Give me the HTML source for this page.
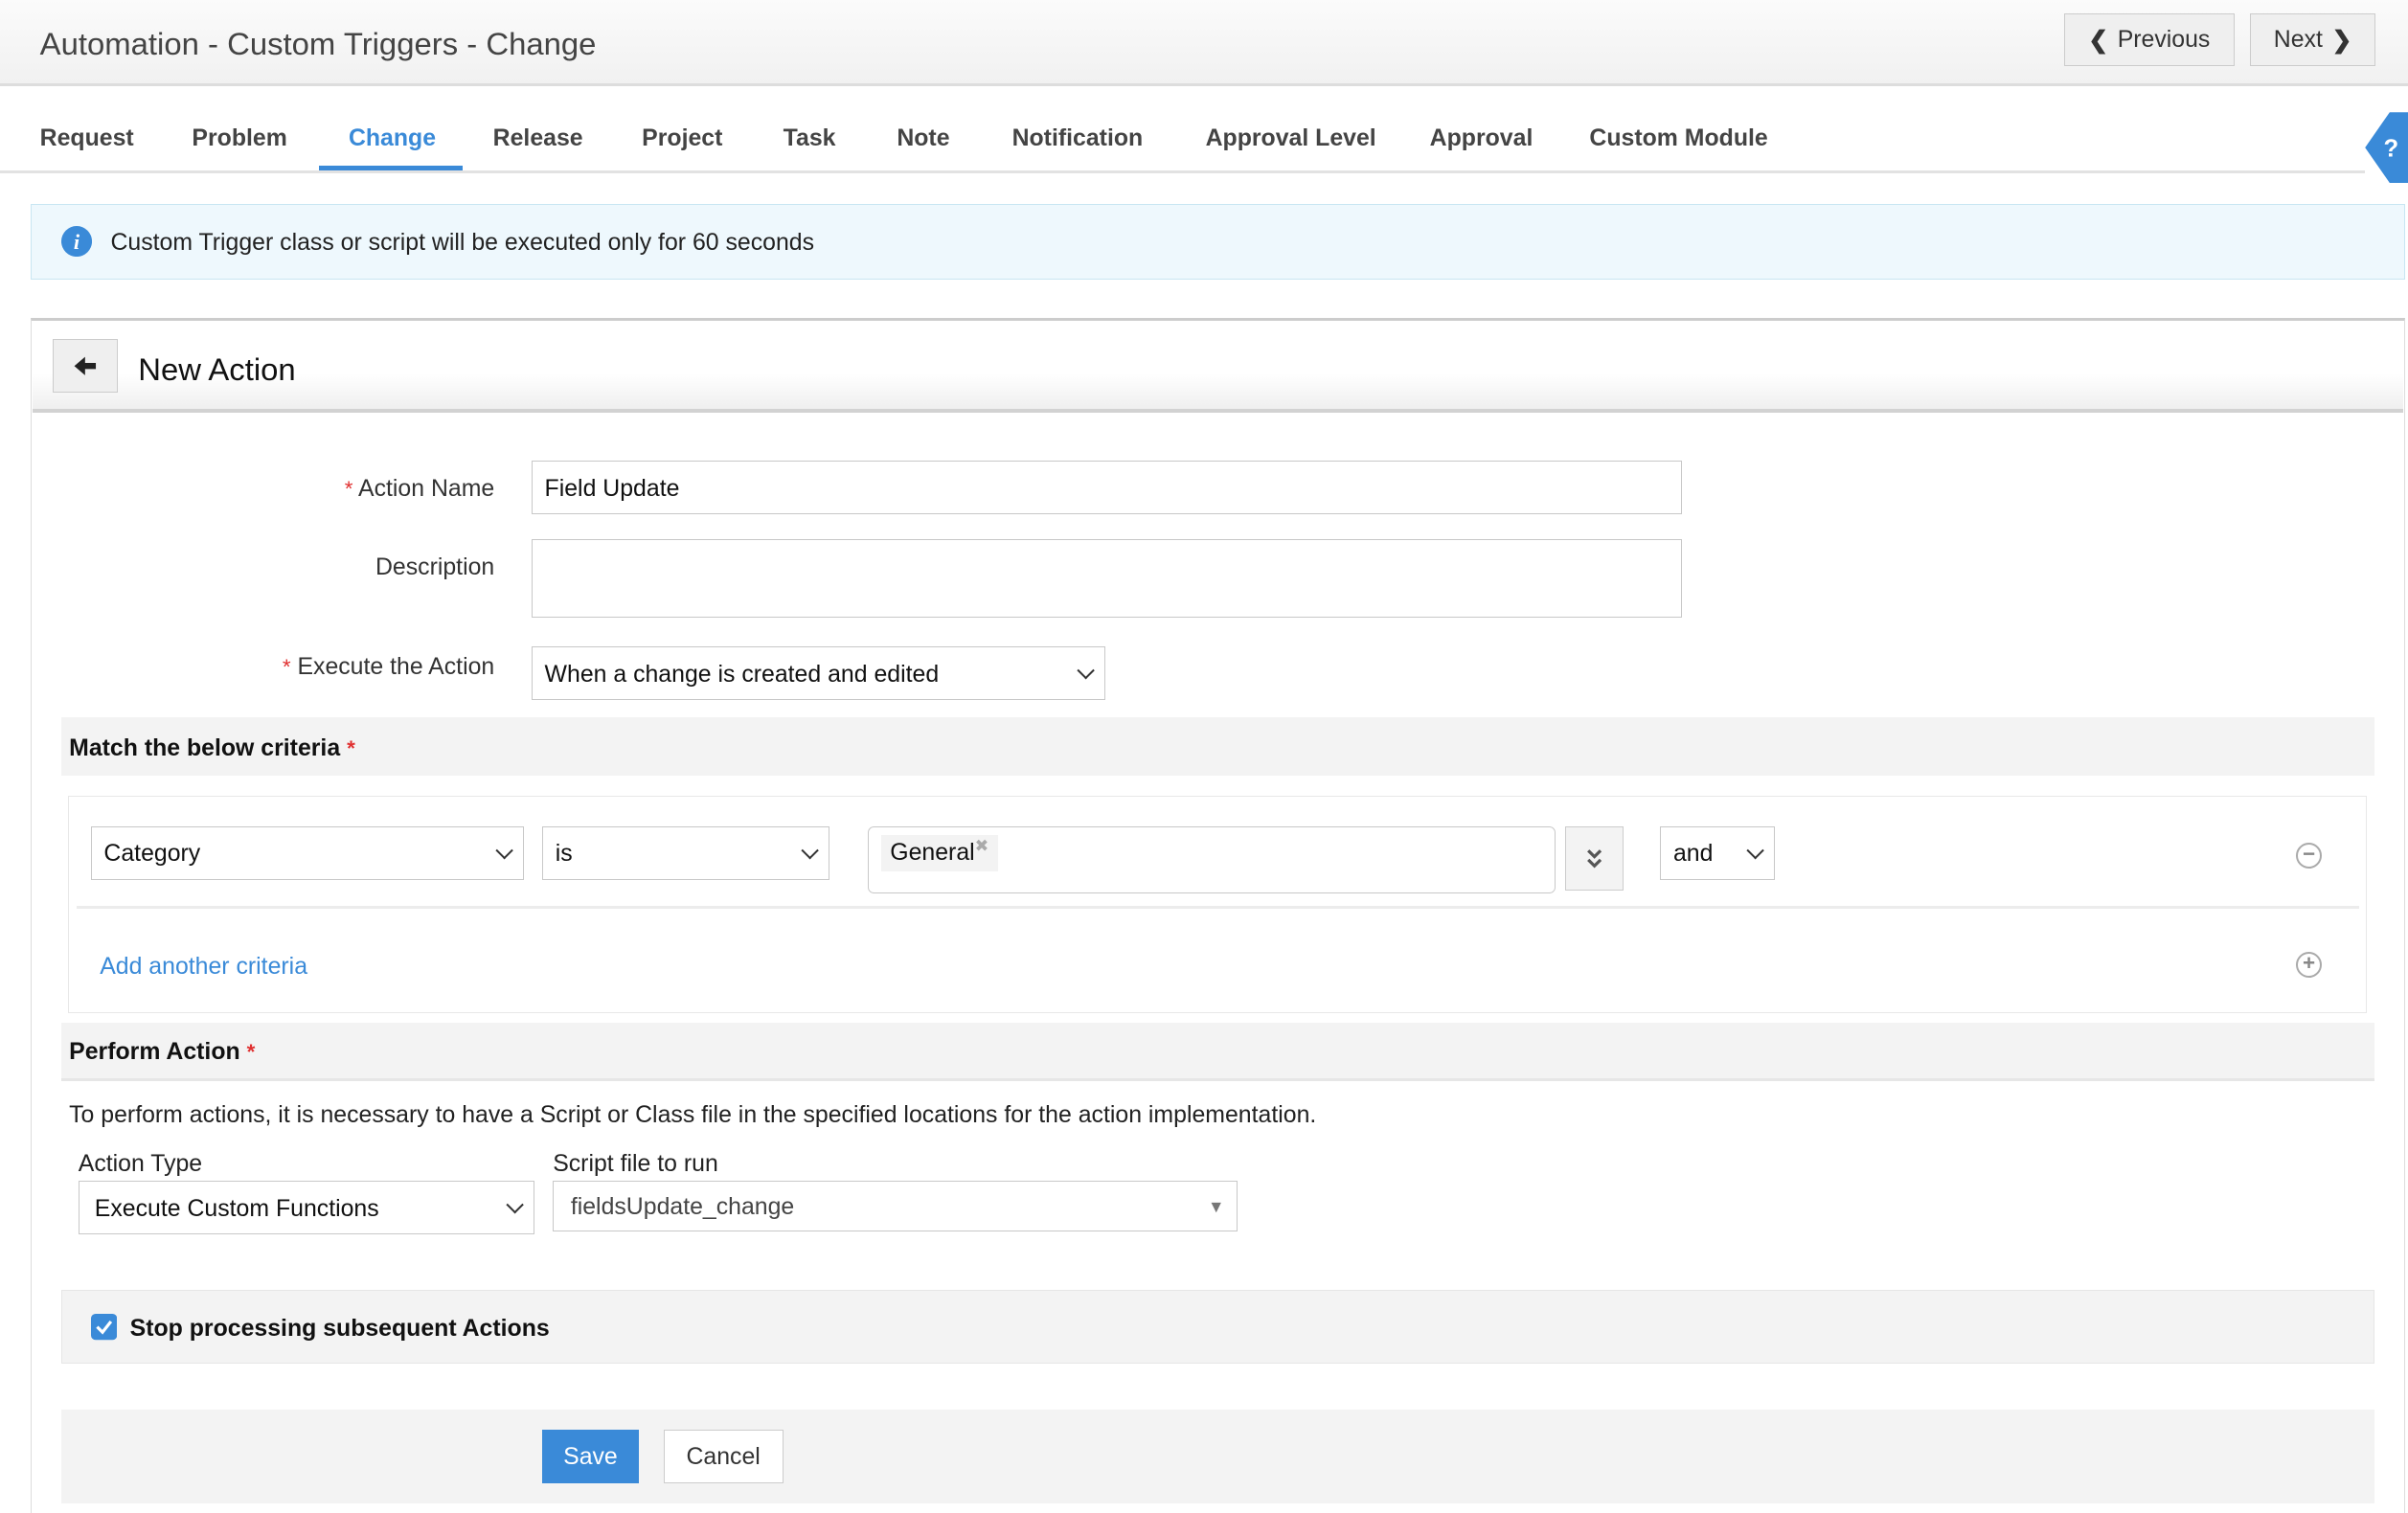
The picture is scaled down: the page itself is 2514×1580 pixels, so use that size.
<!DOCTYPE html>
<html><head><meta charset="utf-8"><style>
*{box-sizing:border-box;margin:0;padding:0}
html,body{width:2514px;height:1580px;overflow:hidden;background:#fff}
#r{zoom:1.6033;width:1568px;height:985px;position:relative;font-family:"Liberation Sans",sans-serif;color:#222;font-size:15.5px}
.a{position:absolute}
.hdr{left:0;top:0;width:1568px;height:56px;background:linear-gradient(#fbfbfb,#f1f1f1);border-bottom:2px solid #ddd}
.btn{border:1px solid #ccc;background:#efefef;color:#333;font-size:15.5px;display:flex;align-items:center;justify-content:center;gap:6px}
.tabs span{position:absolute;top:82px;font-weight:bold;color:#444;font-size:15.5px}
.inp{border:1px solid #c8c8c8;background:#fff;display:flex;align-items:center;padding-left:8px;font-size:15.5px;color:#111;padding-top:2px}
.sel::after{content:"";position:absolute;right:8px;top:50%;width:7px;height:7px;border-right:1.5px solid #333;border-bottom:1.5px solid #333;transform:translateY(-70%) rotate(45deg)}
.lbl{font-size:15.5px;color:#333;text-align:right}
.star{color:#e03030;font-size:14px}
.sec{background:#f3f3f3;font-weight:bold;font-size:15.5px;color:#111;display:flex;align-items:center;padding-left:5px;padding-top:3px}
.circ{width:17px;height:17px;border:1.5px solid #aaa;border-radius:50%;color:#888;font-size:14px;line-height:13px;text-align:center;font-weight:bold}
</style></head><body><div id="r">
<div class="a hdr"></div>
<div class="a" style="left:26px;top:17px;font-size:20.5px;color:#444">Automation - Custom Triggers - Change</div>
<div class="a btn" style="left:1344px;top:9px;width:111px;height:34px"><span style="font-weight:bold">&#10094;</span>Previous</div>
<div class="a btn" style="left:1465px;top:9px;width:82px;height:34px">Next<span style="font-weight:bold">&#10095;</span></div>
<div class="tabs">
<span style="left:26px">Request</span><span style="left:125px">Problem</span><span style="left:227px;color:#3a8ad8">Change</span><span style="left:321px">Release</span><span style="left:418px">Project</span><span style="left:510px">Task</span><span style="left:584px">Note</span><span style="left:659px">Notification</span><span style="left:785px">Approval Level</span><span style="left:931px">Approval</span><span style="left:1035px">Custom Module</span>
</div>
<div class="a" style="left:208px;top:108px;width:93px;height:4px;background:#3a8ad8"></div>
<div class="a" style="left:0;top:111px;width:1540px;height:2px;background:#e2e2e2"></div>
<svg class="a" style="left:1538px;top:71px" width="30" height="50"><path d="M30 2 L30 48 L18 48 L2 25 L18 2 Z" fill="#3a8ad8"/><text x="14" y="31" fill="#fff" font-size="16" font-family="Liberation Sans" font-weight="bold">?</text></svg>
<div class="a" style="left:20px;top:133px;width:1546px;height:49px;background:#eef8fd;border:1px solid #c8e6f2"></div>
<svg class="a" style="left:40px;top:147px" width="20" height="20"><circle cx="10" cy="10" r="10" fill="#3a8ad8"/><text x="10" y="15" fill="#fff" font-size="14" font-style="italic" font-weight="bold" text-anchor="middle" font-family="Liberation Serif">i</text></svg>
<div class="a" style="left:72px;top:150px">Custom Trigger class or script will be executed only for 60 seconds</div>
<div class="a" style="left:20px;top:207px;width:1546px;height:780px;border:1px solid #ddd;border-top:2px solid #ccc"></div>
<div class="a" style="left:21px;top:209px;width:1544px;height:60px;background:linear-gradient(#fff 60%,#efefef);border-bottom:3px solid #d2d2d2"></div>
<div class="a btn" style="left:34px;top:221px;width:43px;height:35px"><svg width="16" height="14"><path d="M1 7 L8 1 L8 5 L15 5 L15 9 L8 9 L8 13 Z" fill="#222"/></svg></div>
<div class="a" style="left:90px;top:229px;font-size:20.5px;color:#111">New Action</div>
<div class="a lbl" style="left:100px;top:310px;width:222px"><span class="star">*</span> Action Name</div>
<div class="a inp" style="left:346px;top:300px;width:749px;height:35px">Field Update</div>
<div class="a lbl" style="left:100px;top:361px;width:222px">Description</div>
<div class="a inp" style="left:346px;top:351px;width:749px;height:51px"></div>
<div class="a lbl" style="left:100px;top:426px;width:222px"><span class="star">*</span> Execute the Action</div>
<div class="a inp sel" style="left:346px;top:421px;width:374px;height:35px">When a change is created and edited</div>
<div class="a sec" style="left:40px;top:467px;width:1506px;height:38px">Match the below criteria&nbsp;<span class="star">*</span></div>
<div class="a" style="left:44px;top:518px;width:1497px;height:142px;border:1px solid #e8e8e8"></div>
<div class="a inp sel" style="left:59px;top:538px;width:282px;height:35px">Category</div>
<div class="a inp sel" style="left:353px;top:538px;width:187px;height:35px">is</div>
<div class="a inp" style="left:565px;top:538px;width:448px;height:44px;border-radius:4px;align-items:flex-start;padding-top:5px"><span style="background:#f3f3f3;padding:0 6px;height:24px;line-height:24px">General<span style="color:#aaa;font-size:11px;vertical-align:top;line-height:14px">✖</span></span></div>
<div class="a btn" style="left:1019px;top:538px;width:38px;height:42px;background:#f3f3f3"><svg width="12" height="14"><path d="M2 2 L6 6 L10 2 M2 8 L6 12 L10 8" stroke="#555" stroke-width="2" fill="none"/></svg></div>
<div class="a inp sel" style="left:1081px;top:538px;width:75px;height:35px">and</div>
<div class="a circ" style="left:1495px;top:549px">−</div>
<div class="a" style="left:50px;top:590px;width:1486px;height:2px;background:#ececec"></div>
<div class="a" style="left:65px;top:621px;color:#3a8ad8">Add another criteria</div>
<div class="a circ" style="left:1495px;top:620px">+</div>
<div class="a sec" style="left:40px;top:666px;width:1506px;height:38px;border-bottom:2px solid #e6e6e6">Perform Action&nbsp;<span class="star">*</span></div>
<div class="a" style="left:45px;top:718px">To perform actions, it is necessary to have a Script or Class file in the specified locations for the action implementation.</div>
<div class="a" style="left:51px;top:750px">Action Type</div>
<div class="a" style="left:360px;top:750px">Script file to run</div>
<div class="a inp sel" style="left:51px;top:769px;width:297px;height:35px;padding-left:10px">Execute Custom Functions</div>
<div class="a inp" style="left:360px;top:769px;width:446px;height:33px;padding-left:11px;color:#444">fieldsUpdate_change<span style="position:absolute;right:8px;color:#777;font-size:11px">▼</span></div>
<div class="a sec" style="left:40px;top:840px;width:1506px;height:48px;border:1px solid #e6e6e6;padding-left:44px">Stop processing subsequent Actions</div>
<svg class="a" style="left:59px;top:856px" width="17" height="17"><rect width="17" height="17" rx="3" fill="#3a8ad8"/><path d="M4 8.5 L7.5 12 L13 5" stroke="#fff" stroke-width="2" fill="none"/></svg>
<div class="a" style="left:40px;top:918px;width:1506px;height:61px;background:#f3f3f3"></div>
<div class="a" style="left:353px;top:931px;width:63px;height:35px;background:#3a8ad8;color:#fff;display:flex;align-items:center;justify-content:center;padding-top:2px">Save</div>
<div class="a btn" style="left:432px;top:931px;width:78px;height:35px;background:#fff;padding-top:2px">Cancel</div>
</div></body></html>
